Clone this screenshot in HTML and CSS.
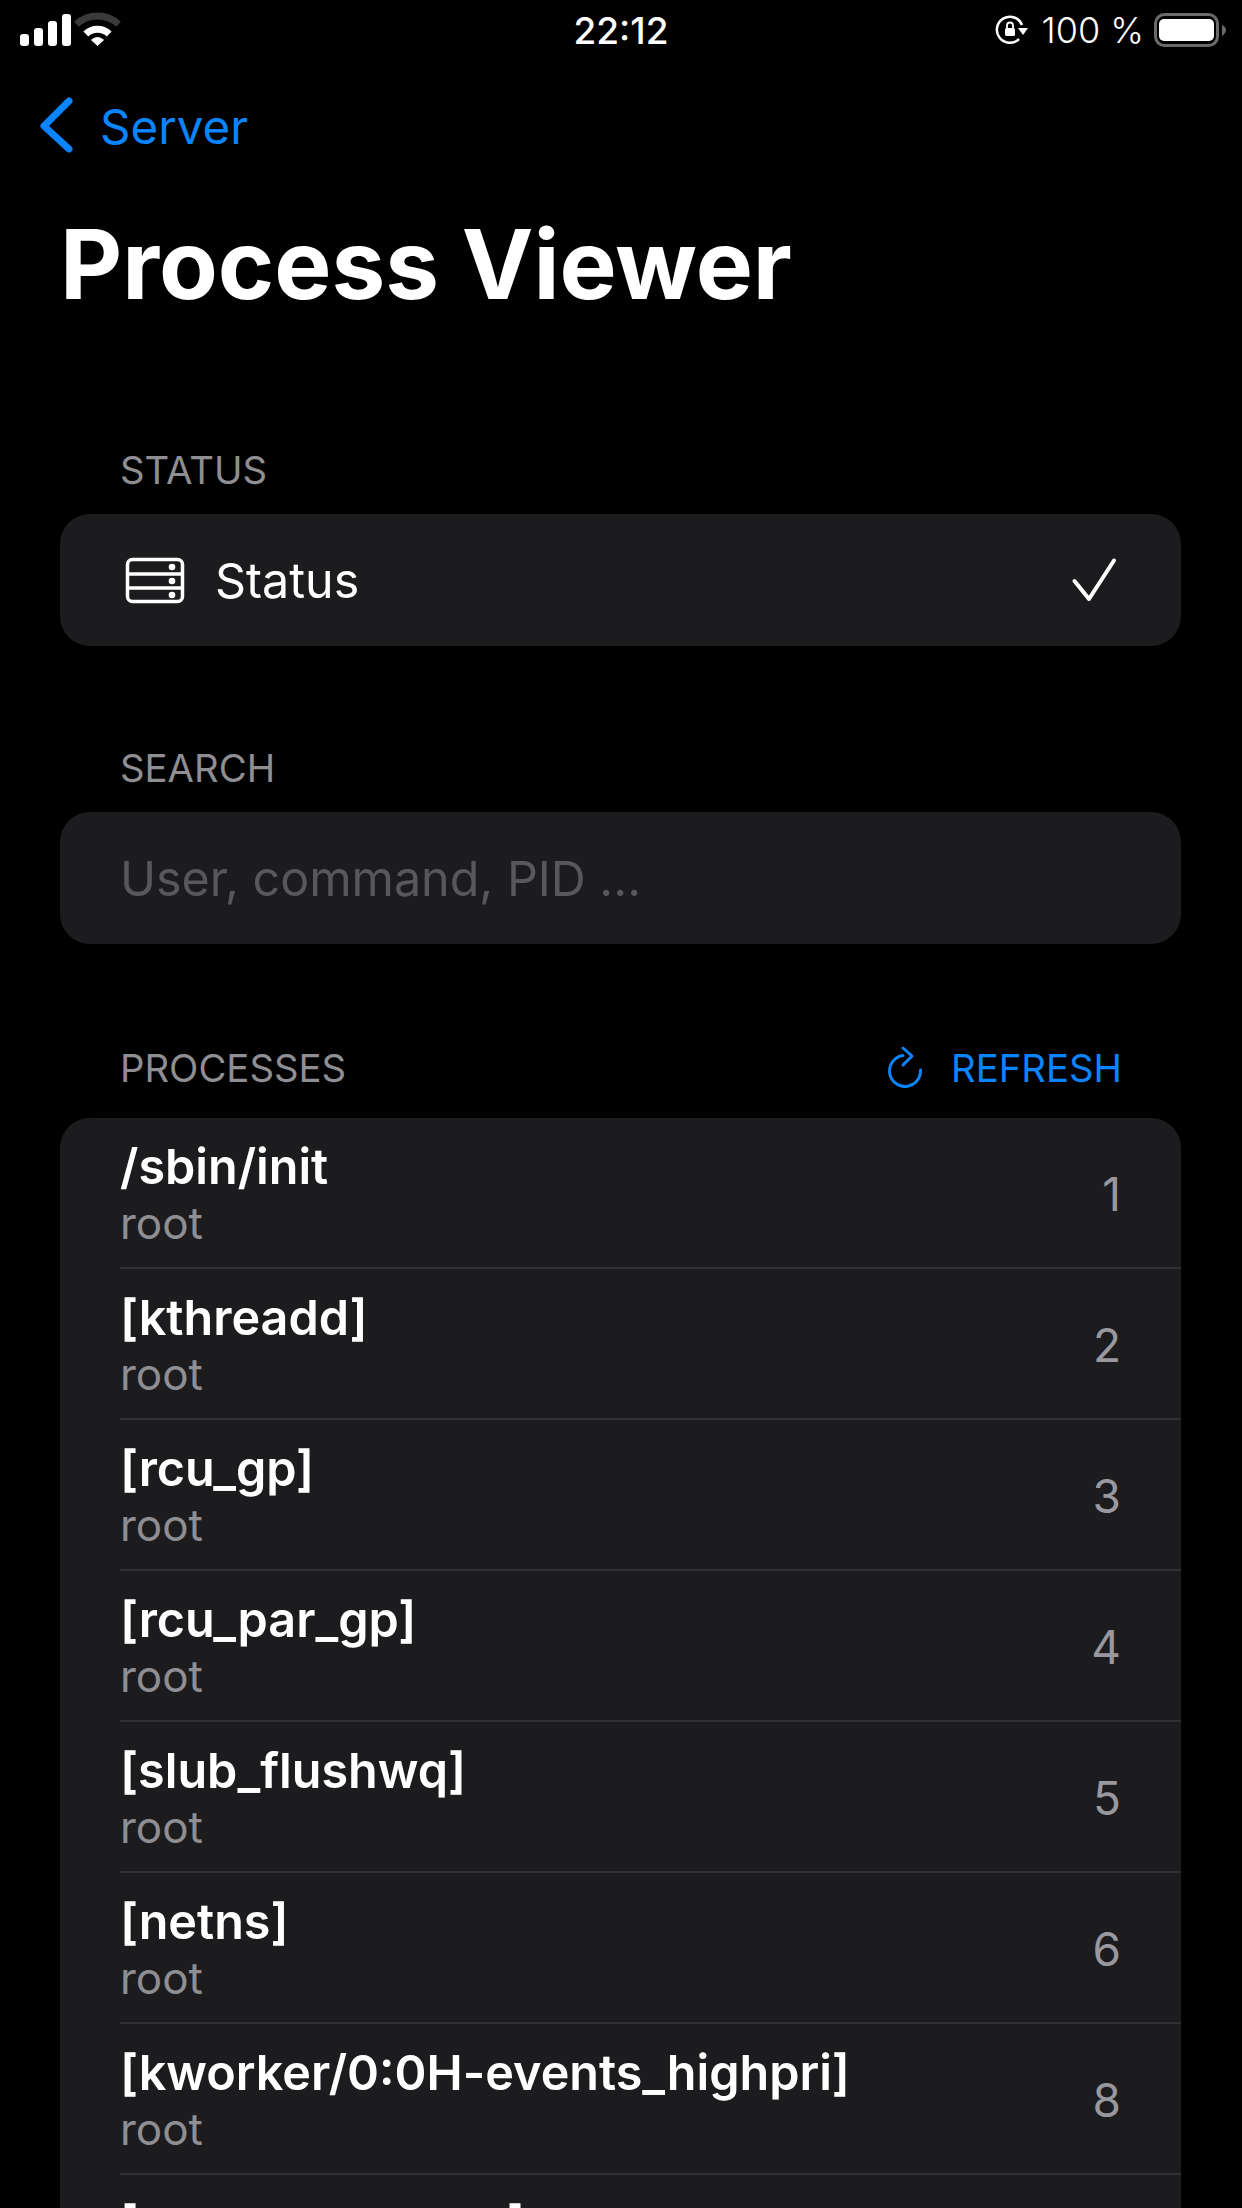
FILE: index.html
```html
<!DOCTYPE html>
<html lang="en">
  <head>
    <meta charset="UTF-8" />
    <meta name="viewport" content="width=device-width, initial-scale=1.0" />
    <title>Process Viewer</title>
    <link rel="stylesheet" href="styles.css">
  </head>
  <body>
    <div id="wrapper">
      <!-- status bar -->
      <div class="statusBar">
        <svg class="signalIcon" width="125" height="60" viewBox="0 0 125 60">
          <rect x="20" y="34" width="9" height="12" rx="3" fill="#fff" />
          <rect x="34" y="28" width="9" height="18" rx="3" fill="#fff" />
          <rect x="48" y="21" width="9" height="25" rx="3" fill="#fff" />
          <rect x="62" y="14" width="9" height="32" rx="3" fill="#fff" />
          <path d="M76.5 24.2 A31 31 0 0 1 118.5 24.2" fill="none" stroke="#3a3a3a" stroke-width="7" />
          <path d="M85.8 34 A17 17 0 0 1 109.2 34" fill="none" stroke="#fff" stroke-width="7" />
          <path d="M97.5 45.5 L91.5 40 Q97.5 35 103.5 40 Z" fill="#fff" stroke="#fff" stroke-linejoin="round" />
        </svg>
        <div class="statusTime">22:12</div>
        <div class="statusRight">
          <svg class="lockIcon" width="36" height="32" viewBox="0 0 36 32">
            <path d="M29 11 A13 13 0 1 0 26 25" fill="none" stroke="#fff" stroke-width="2.5" />
            <path d="M25 14 L35 14 L30 21 Z" fill="#fff" />
            <rect x="12" y="14" width="10" height="8" rx="1.5" fill="#fff" />
            <path d="M14 14 V11.5 A3 3 0 0 1 20 11.5 V14" fill="none" stroke="#fff" stroke-width="1.8" />
          </svg>
          <span>100 %</span>
          <svg width="75" height="36" viewBox="0 0 75 36">
            <rect x="2.5" y="2.5" width="62" height="31" rx="9" fill="none" stroke="#6a6a6a" stroke-width="3" />
            <rect x="6" y="7" width="55" height="22" rx="5" fill="#fff" />
            <path d="M69 13 Q73 15 73 18 Q73 21 69 24 Z" fill="#6a6a6a" />
          </svg>
        </div>
      </div>

      <!-- back button -->
      <div class="navBar">
        <svg width="36" height="60" viewBox="0 0 36 60">
          <path d="M31 5 L6 30 L31 53" fill="none" stroke="#0a84ff" stroke-width="7" stroke-linecap="round" stroke-linejoin="round" />
        </svg>
        <span>Server</span>
      </div>

      <h1 class="title">Process Viewer</h1>

      <div class="sectionHead firstHead">STATUS</div>
      <div class="card statusCard">
        <svg class="serverIcon" width="60" height="47" viewBox="0 0 60 47">
          <rect x="2.5" y="2.5" width="55" height="42" rx="5" fill="none" stroke="#fff" stroke-width="3.5" />
          <path d="M2.5 17 H57.5 M2.5 31 H57.5" stroke="#fff" stroke-width="3.5" />
          <circle cx="47" cy="10" r="3.3" fill="#fff" />
          <circle cx="47" cy="24" r="3.3" fill="#fff" />
          <circle cx="47" cy="38" r="3.3" fill="#fff" />
        </svg>
        <span>Status</span>
        <svg class="checkIcon" width="50" height="50" viewBox="0 0 50 50">
          <path d="M4.5 26 L19 44 L44 5.5" fill="none" stroke="#fff" stroke-width="4" stroke-linecap="round" stroke-linejoin="round" />
        </svg>
      </div>

      <div class="sectionHead">SEARCH</div>
      <div class="card searchCard">User, command, PID ...</div>

      <div class="sectionHead processHead">
        <span>PROCESSES</span>
        <div class="refresh">
          <svg width="40" height="46" viewBox="0 0 40 46">
            <path d="M18 10.6 A15.5 15.5 0 1 0 35.5 25" fill="none" stroke="#0a84ff" stroke-width="3" stroke-linecap="round" />
            <path d="M18 3 L27 11 L18 20" fill="none" stroke="#0a84ff" stroke-width="3" stroke-linecap="round" stroke-linejoin="round" />
          </svg>
          <span>REFRESH</span>
        </div>
      </div>
      <div class="card processList">
        <div class="row">
          <div class="rowText"><div class="cmd">/sbin/init</div><div class="user">root</div></div>
          <div class="pid">1</div>
        </div>
        <div class="row">
          <div class="rowText"><div class="cmd">[kthreadd]</div><div class="user">root</div></div>
          <div class="pid">2</div>
        </div>
        <div class="row">
          <div class="rowText"><div class="cmd">[rcu_gp]</div><div class="user">root</div></div>
          <div class="pid">3</div>
        </div>
        <div class="row">
          <div class="rowText"><div class="cmd">[rcu_par_gp]</div><div class="user">root</div></div>
          <div class="pid">4</div>
        </div>
        <div class="row">
          <div class="rowText"><div class="cmd">[slub_flushwq]</div><div class="user">root</div></div>
          <div class="pid">5</div>
        </div>
        <div class="row">
          <div class="rowText"><div class="cmd">[netns]</div><div class="user">root</div></div>
          <div class="pid">6</div>
        </div>
        <div class="row">
          <div class="rowText"><div class="cmd">[kworker/0:0H-events_highpri]</div><div class="user">root</div></div>
          <div class="pid">8</div>
        </div>
        <div class="row">
          <div class="rowText"><div class="cmd">[mm_percpu_wq]</div><div class="user">root</div></div>
          <div class="pid">9</div>
        </div>
      </div>
    </div>
  </body>
</html>
```

FILE: styles.css
```css
* {
  padding: 0;
  margin: 0;
  box-sizing: border-box;
}
body {
  background: #000;
  color: #fff;
  font-family: Inter, "Liberation Sans", sans-serif;
}
#wrapper {
  width: 1242px;
  height: 2208px;
  overflow: hidden;
}

/* status bar */
.statusBar {
  display: grid;
  grid-template-columns: 1fr auto 1fr;
  align-items: center;
  height: 60px;
}
.statusTime {
  font-size: 37px;
  font-weight: 500;
}
.statusRight {
  display: flex;
  justify-content: flex-end;
  align-items: center;
  gap: 9px;
  padding-right: 14px;
  font-size: 36px;
  font-weight: 300;
}
.lockIcon {
  margin-right: 4px;
}

/* back button */
.navBar {
  display: flex;
  align-items: center;
  gap: 26px;
  height: 132px;
  padding-left: 38px;
  color: #0a84ff;
  font-size: 47.5px;
}

.title {
  margin-top: 22px;
  padding-left: 60px;
  font-size: 96px;
  line-height: 100px;
  font-weight: 700;
}

/* sections */
.sectionHead {
  padding: 99px 120px 21px 120px;
  color: #8e8e93;
  font-size: 38.3px;
  line-height: 46px;
}
.firstHead {
  padding-top: 133px;
}
.processHead {
  display: flex;
  justify-content: space-between;
  align-items: center;
  padding-top: 101px;
  padding-bottom: 27px;
}
.refresh {
  display: flex;
  align-items: center;
  gap: 26px;
  color: #0a84ff;
}

.card {
  margin: 0 61px 0 60px;
  background: #1c1c1e;
  border-radius: 30px;
}
.statusCard,
.searchCard {
  display: flex;
  align-items: center;
  height: 132px;
  font-size: 48.4px;
}
.statusCard {
  padding: 0 61px 0 65px;
}
.serverIcon {
  margin-right: 30px;
}
.checkIcon {
  margin-left: auto;
}
.searchCard {
  padding-left: 60px;
  color: #58585c;
}

/* process list */
.processList {
  padding-left: 60px;
}
.row {
  display: flex;
  justify-content: space-between;
  align-items: center;
  height: 151px;
  padding-right: 60px;
  border-bottom: 2px solid #313133;
}
.rowText {
  align-self: flex-start;
}
.cmd {
  padding-top: 19px;
  font-size: 48.5px;
  line-height: 60px;
  font-weight: 600;
}
.user {
  color: #8e8e93;
  font-size: 44px;
  line-height: 53px;
}
.pid {
  padding-top: 2px;
  color: #98989e;
  font-size: 46px;
}
```
